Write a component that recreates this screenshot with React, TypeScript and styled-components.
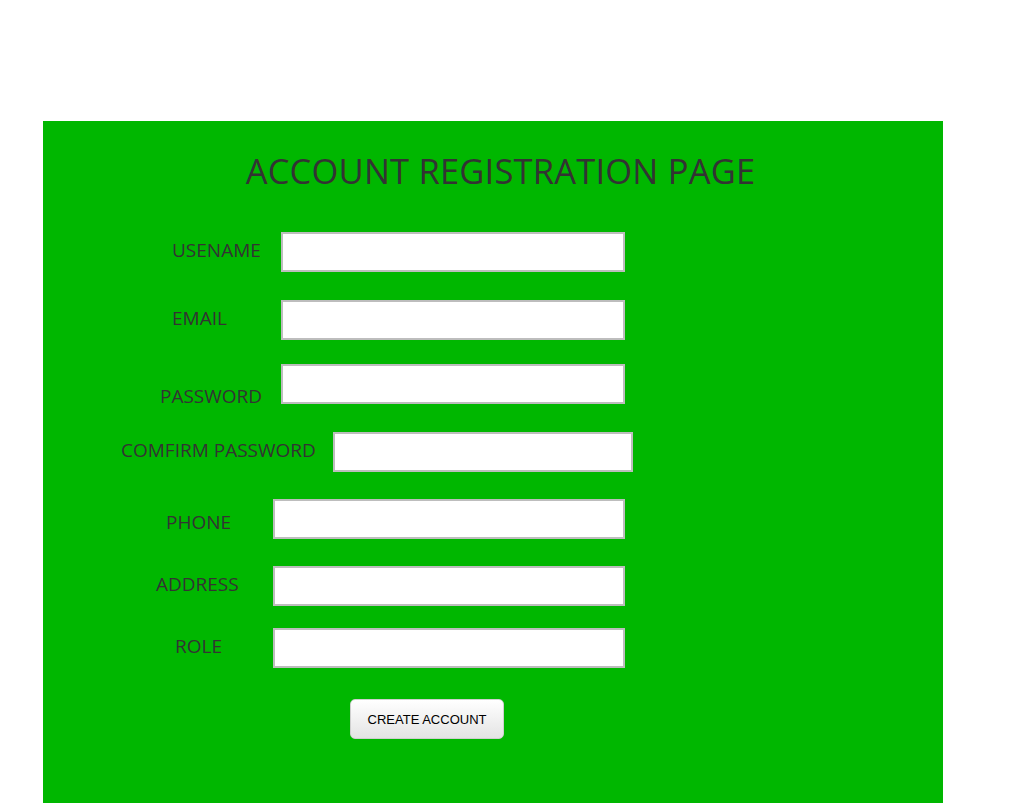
import React from "react";
import styled, { createGlobalStyle } from "styled-components";

const Global = createGlobalStyle`
  html, body { margin: 0; padding: 0; background: #ffffff; }
  body { font-family: "Open Sans", "Liberation Sans", sans-serif; }
`;

const Page = styled.div`
  padding: 121px 0 0 43px;
  height: 803px;
  box-sizing: border-box;
  overflow: hidden;
`;

const Panel = styled.div`
  width: 900px;
  height: 682px;
  background: #00b700;
  display: flex;
  flex-direction: column;
`;

const Title = styled.h1`
  margin: 28px 0 0 15px;
  text-align: center;
  font-family: "Open Sans", sans-serif;
  font-weight: 400;
  font-size: 34.5px;
  line-height: 44px;
  color: #333333;
  letter-spacing: 0.2px;
`;

const Form = styled.form`
  display: flex;
  flex-direction: column;
  margin-top: 39px;
`;

const Row = styled.div<{ $top: number; $left: number }>`
  display: flex;
  align-items: flex-start;
  height: 40px;
  margin-top: ${(p) => p.$top}px;
  padding-left: ${(p) => p.$left}px;
`;

const Label = styled.label<{ $width: number; $drop: number }>`
  width: ${(p) => p.$width}px;
  flex: none;
  margin-top: ${(p) => p.$drop}px;
  font-family: "Open Sans", sans-serif;
  font-size: 19px;
  line-height: 24px;
  color: #333333;
  white-space: nowrap;
`;

const Field = styled.input<{ $width: number }>`
  width: ${(p) => p.$width}px;
  height: 40px;
  box-sizing: border-box;
  border: 2px solid #bdbdbd;
  background: #ffffff;
  outline: none;
  margin: 0;
  padding: 2px 4px;
  font-size: 15px;
`;

const ButtonRow = styled.div`
  margin-top: 31px;
  padding-left: 307px;
`;

const Button = styled.button`
  width: 154px;
  height: 40px;
  border: 1px solid #cfcfcf;
  border-radius: 5px;
  background: linear-gradient(#ffffff, #e4e4e4);
  font-family: "Liberation Sans", Arial, sans-serif;
  font-size: 13px;
  color: #000000;
  cursor: pointer;
  padding: 0;
`;

type FieldDef = {
  label: string;
  top: number;
  left: number;
  inputX: number;
  width: number;
  drop: number;
  type?: string;
};

const fields: FieldDef[] = [
  { label: "USENAME", top: 0, left: 129, inputX: 281, width: 344, drop: 6 },
  { label: "EMAIL", top: 28, left: 129, inputX: 281, width: 344, drop: 6 },
  { label: "PASSWORD", top: 24, left: 117, inputX: 281, width: 344, drop: 20, type: "password" },
  { label: "COMFIRM PASSWORD", top: 28, left: 78, inputX: 333, width: 300, drop: 6, type: "password" },
  { label: "PHONE", top: 27, left: 123, inputX: 273, width: 352, drop: 11 },
  { label: "ADDRESS", top: 27, left: 113, inputX: 273, width: 352, drop: 6 },
  { label: "ROLE", top: 22, left: 132, inputX: 273, width: 352, drop: 6 },
];

export default function App() {
  return (
    <>
      <Global />
      <Page>
        <Panel>
          <Title>ACCOUNT REGISTRATION PAGE</Title>
          <Form onSubmit={(e) => e.preventDefault()}>
            {fields.map((f) => (
              <Row key={f.label} $top={f.top} $left={f.left}>
                <Label $width={f.inputX - 43 - f.left} $drop={f.drop}>
                  {f.label}
                </Label>
                <Field $width={f.width} type={f.type ?? "text"} />
              </Row>
            ))}
            <ButtonRow>
              <Button type="submit">CREATE ACCOUNT</Button>
            </ButtonRow>
          </Form>
        </Panel>
      </Page>
    </>
  );
}
